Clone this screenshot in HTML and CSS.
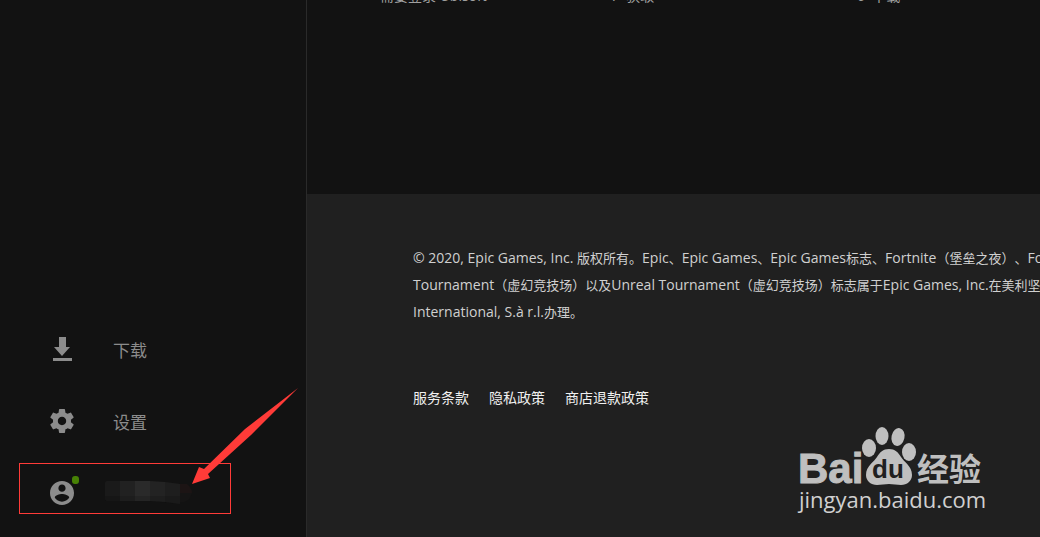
FILE: index.html
```html
<!DOCTYPE html>
<html lang="zh-CN">
    <head>
        <meta charset="utf-8">
        <title>Epic Games</title>
        <link rel="stylesheet" href="styles.css">
    </head>

    <body>
        <nav class="sidebar">
            <a class="nav-item" href="#">
                <svg class="icon" viewBox="0 0 24 24">
                    <path d="M9 0h7v10h4l-8 9-8-9h5zM3 21h19v3H3z"/>
                </svg>
                <span>下载</span>
            </a>
            <a class="nav-item" href="#">
                <svg class="icon" viewBox="2 2 20 20">
                    <path d="M19.43 12.98c.04-.32.07-.64.07-.98s-.03-.66-.07-.98l2.11-1.65c.19-.15.24-.42.12-.64l-2-3.46c-.12-.22-.39-.3-.61-.22l-2.49 1c-.52-.4-1.08-.73-1.69-.98l-.38-2.65C14.46 2.18 14.25 2 14 2h-4c-.25 0-.46.18-.49.42l-.38 2.65c-.61.25-1.17.59-1.69.98l-2.49-1c-.23-.09-.49 0-.61.22l-2 3.46c-.13.22-.07.49.12.64l2.11 1.65c-.04.32-.07.65-.07.98s.03.66.07.98l-2.11 1.65c-.19.15-.24.42-.12.64l2 3.46c.12.22.39.3.61.22l2.49-1c.52.4 1.08.73 1.69.98l.38 2.65c.03.24.24.42.49.42h4c.25 0 .46-.18.49-.42l.38-2.65c.61-.25 1.17-.59 1.69-.98l2.49 1c.23.09.49 0 .61-.22l2-3.46c.12-.22.07-.49-.12-.64l-2.11-1.65zM12 15.5c-1.93 0-3.5-1.57-3.5-3.5s1.57-3.5 3.5-3.5 3.5 1.57 3.5 3.5-1.57 3.5-3.5 3.5z"/>
                </svg>
                <span>设置</span>
            </a>
            <a class="nav-item account" href="#" aria-label="账户">
                <span class="avatar">
                    <svg class="icon" viewBox="2 2 20 20">
                        <path d="M12 2C6.48 2 2 6.48 2 12s4.48 10 10 10 10-4.48 10-10S17.52 2 12 2zm0 3c1.66 0 3 1.34 3 3s-1.34 3-3 3-3-1.34-3-3 1.34-3 3-3zm0 14.2c-2.5 0-4.71-1.28-6-3.22.03-1.99 4-3.08 6-3.08 1.99 0 5.97 1.09 6 3.08-1.29 1.94-3.5 3.22-6 3.22z"/>
                    </svg>
                    <span class="status"></span>
                </span>
                <!-- hidden user name -->
                <svg class="user-name" viewBox="0 0 88 24">
                    <path fill="#1a1a1a" d="M2 0h13v20H2q-2 0-2-2V2q0-2 2-2z"/>
                    <path fill="#212121" d="M15 0h15v20H15z"/>
                    <path fill="#2a2a2a" d="M30 0h15v20H30z"/>
                    <path fill="#232323" d="M45 0l15 1v20l-15-1z"/>
                    <path fill="#1e1e1e" d="M60 1l15 2v20l-15-2z"/>
                    <path fill="#1c1414" d="M75 3h7q5 4 5 9H75z"/>
                    <path fill="#151414" d="M75 12h12q-2 8-8 9h-4z"/>
                    <path fill="#000" opacity=".12" d="M0 15h75v8l-30-3H0z"/>
                </svg>
            </a>
        </nav>

        <div class="page">
            <main class="products">
                <span>需要登录 Ubisoft</span>
                <span>7&nbsp; 获取</span>
                <span>6&nbsp; 下载</span>
            </main>
            <footer class="footer">
                <p class="legal">
                    © 2020, Epic Games, Inc. <span class="cn">版权所有。</span>Epic<span class="cn">、</span>Epic Games<span class="cn">、</span>Epic Games<span class="cn">标志、</span>Fortnite<span class="cn">（堡垒之夜）、</span>Fortnite<br>
                    Tournament<span class="cn">（虚幻竞技场）以及</span>Unreal Tournament<span class="cn">（虚幻竞技场）标志属于</span>Epic Games, Inc.<span class="cn">在美利坚合众国</span><br>
                    International, S.à r.l.<span class="cn">办理。</span>
                </p>
                <div class="links">
                    <a href="#">服务条款</a>
                    <a href="#">隐私政策</a>
                    <a href="#">商店退款政策</a>
                </div>
            </footer>
        </div>

        <!-- red arrow over the account row -->
        <svg class="arrow" viewBox="0 0 108 98">
            <path fill="#ff3b38" d="M106 1L53 42 12 82l-5-2-7 17 18-6-2-4 43-39z"/>
        </svg>

        <svg class="watermark" viewBox="0 0 190 92">
            <text class="logo-latin" x="3" y="62">Bai</text>
            <ellipse cx="74" cy="27" rx="7" ry="9"/>
            <ellipse cx="87" cy="15" rx="6.5" ry="9"/>
            <ellipse cx="103" cy="16" rx="6.5" ry="9" transform="rotate(12 103 16)"/>
            <ellipse cx="114" cy="31" rx="7" ry="9"/>
            <path d="M94 28c6 0 9 3 12 8s11 9 11 18c0 6-5 10-11 10-4 0-8-1-12-1s-8 1-12 1c-6 0-11-4-11-10 0-9 8-13 11-18s6-8 12-8z"/>
            <text class="logo-du" x="77" y="57">du</text>
            <text class="logo-cjk" x="122" y="60">经验</text>
            <text class="logo-url" x="4" y="87">jingyan.baidu.com</text>
        </svg>
    </body>
</html>
```
FILE: styles.css
```css
body {
    margin: 0;
    display: flex;
    min-height: 100vh;
    position: relative;
    overflow: hidden;
    background-color: #121212;
    color: #d0d0d0;
    font-family: "Open Sans", "Noto Sans CJK SC", sans-serif;
    font-size: 14px;
    text-spacing-trim: space-all;
}

a {
    color: inherit;
    text-decoration: none;
}

.sidebar {
    box-sizing: border-box;
    flex: 0 0 307px;
    display: flex;
    flex-direction: column;
    justify-content: flex-end;
    gap: 12px;
    padding: 0 75px 23px 19px;
    border-right: 1px solid #2a2a2a;
}

.nav-item {
    box-sizing: border-box;
    height: 60px;
    display: flex;
    align-items: center;
    gap: 39px;
    padding-left: 31px;
    color: #8c8c8c;
    font-size: 17px;
}

.icon {
    display: block;
    width: 24px;
    height: 24px;
    fill: #8c8c8c;
}

/* highlighted account row */
.account {
    height: 51px;
    gap: 31px;
    padding-left: 30px;
    padding-top: 9px;
    border: 1px solid #ff3b38;
}

.avatar {
    position: relative;
}

.status {
    position: absolute;
    top: -5px;
    right: -5px;
    width: 7px;
    height: 8px;
    border-radius: 3px;
    background-color: #478105;
}

.user-name {
    width: 88px;
    height: 24px;
}

.page {
    flex: 1;
    min-width: 0;
    display: flex;
    flex-direction: column;
    overflow: hidden;
}

.products {
    box-sizing: border-box;
    height: 194px;
    display: grid;
    grid-template-columns: 231px 246px 1fr;
    align-items: start;
    padding-left: 73px;
    line-height: 20px;
    color: #a0a0a0;
}

.products span {
    margin-top: -14px;
}

.footer {
    flex: 1;
    padding: 50px 0 0 106px;
    background-color: #202020;
}

.legal {
    margin: 0 0 62px;
    line-height: 27px;
    white-space: nowrap;
}

/* Chinese glyphs look larger than the latin ones */
.cn {
    font-size: 13px;
    line-height: 20px;
}

.links {
    display: flex;
    gap: 20px;
    line-height: 22px;
    color: #f0f0f0;
}

.arrow {
    position: absolute;
    left: 192px;
    bottom: 52px;
    width: 108px;
    height: 98px;
}

.watermark {
    position: absolute;
    right: 55px;
    bottom: 24px;
    width: 190px;
    height: 92px;
    overflow: visible;
    fill: #bfbfbf;
}

.logo-latin {
    font: bold 42px "Liberation Sans", sans-serif;
    stroke: #bfbfbf;
    stroke-width: 1px;
}

.logo-du {
    font: bold 26px "Liberation Sans", sans-serif;
    fill: #202020;
}

.logo-cjk {
    font: bold 32px "Noto Sans CJK SC", sans-serif;
}

.logo-url {
    font: 22px "Open Sans", sans-serif;
    fill: #d0d0d0;
}
```
